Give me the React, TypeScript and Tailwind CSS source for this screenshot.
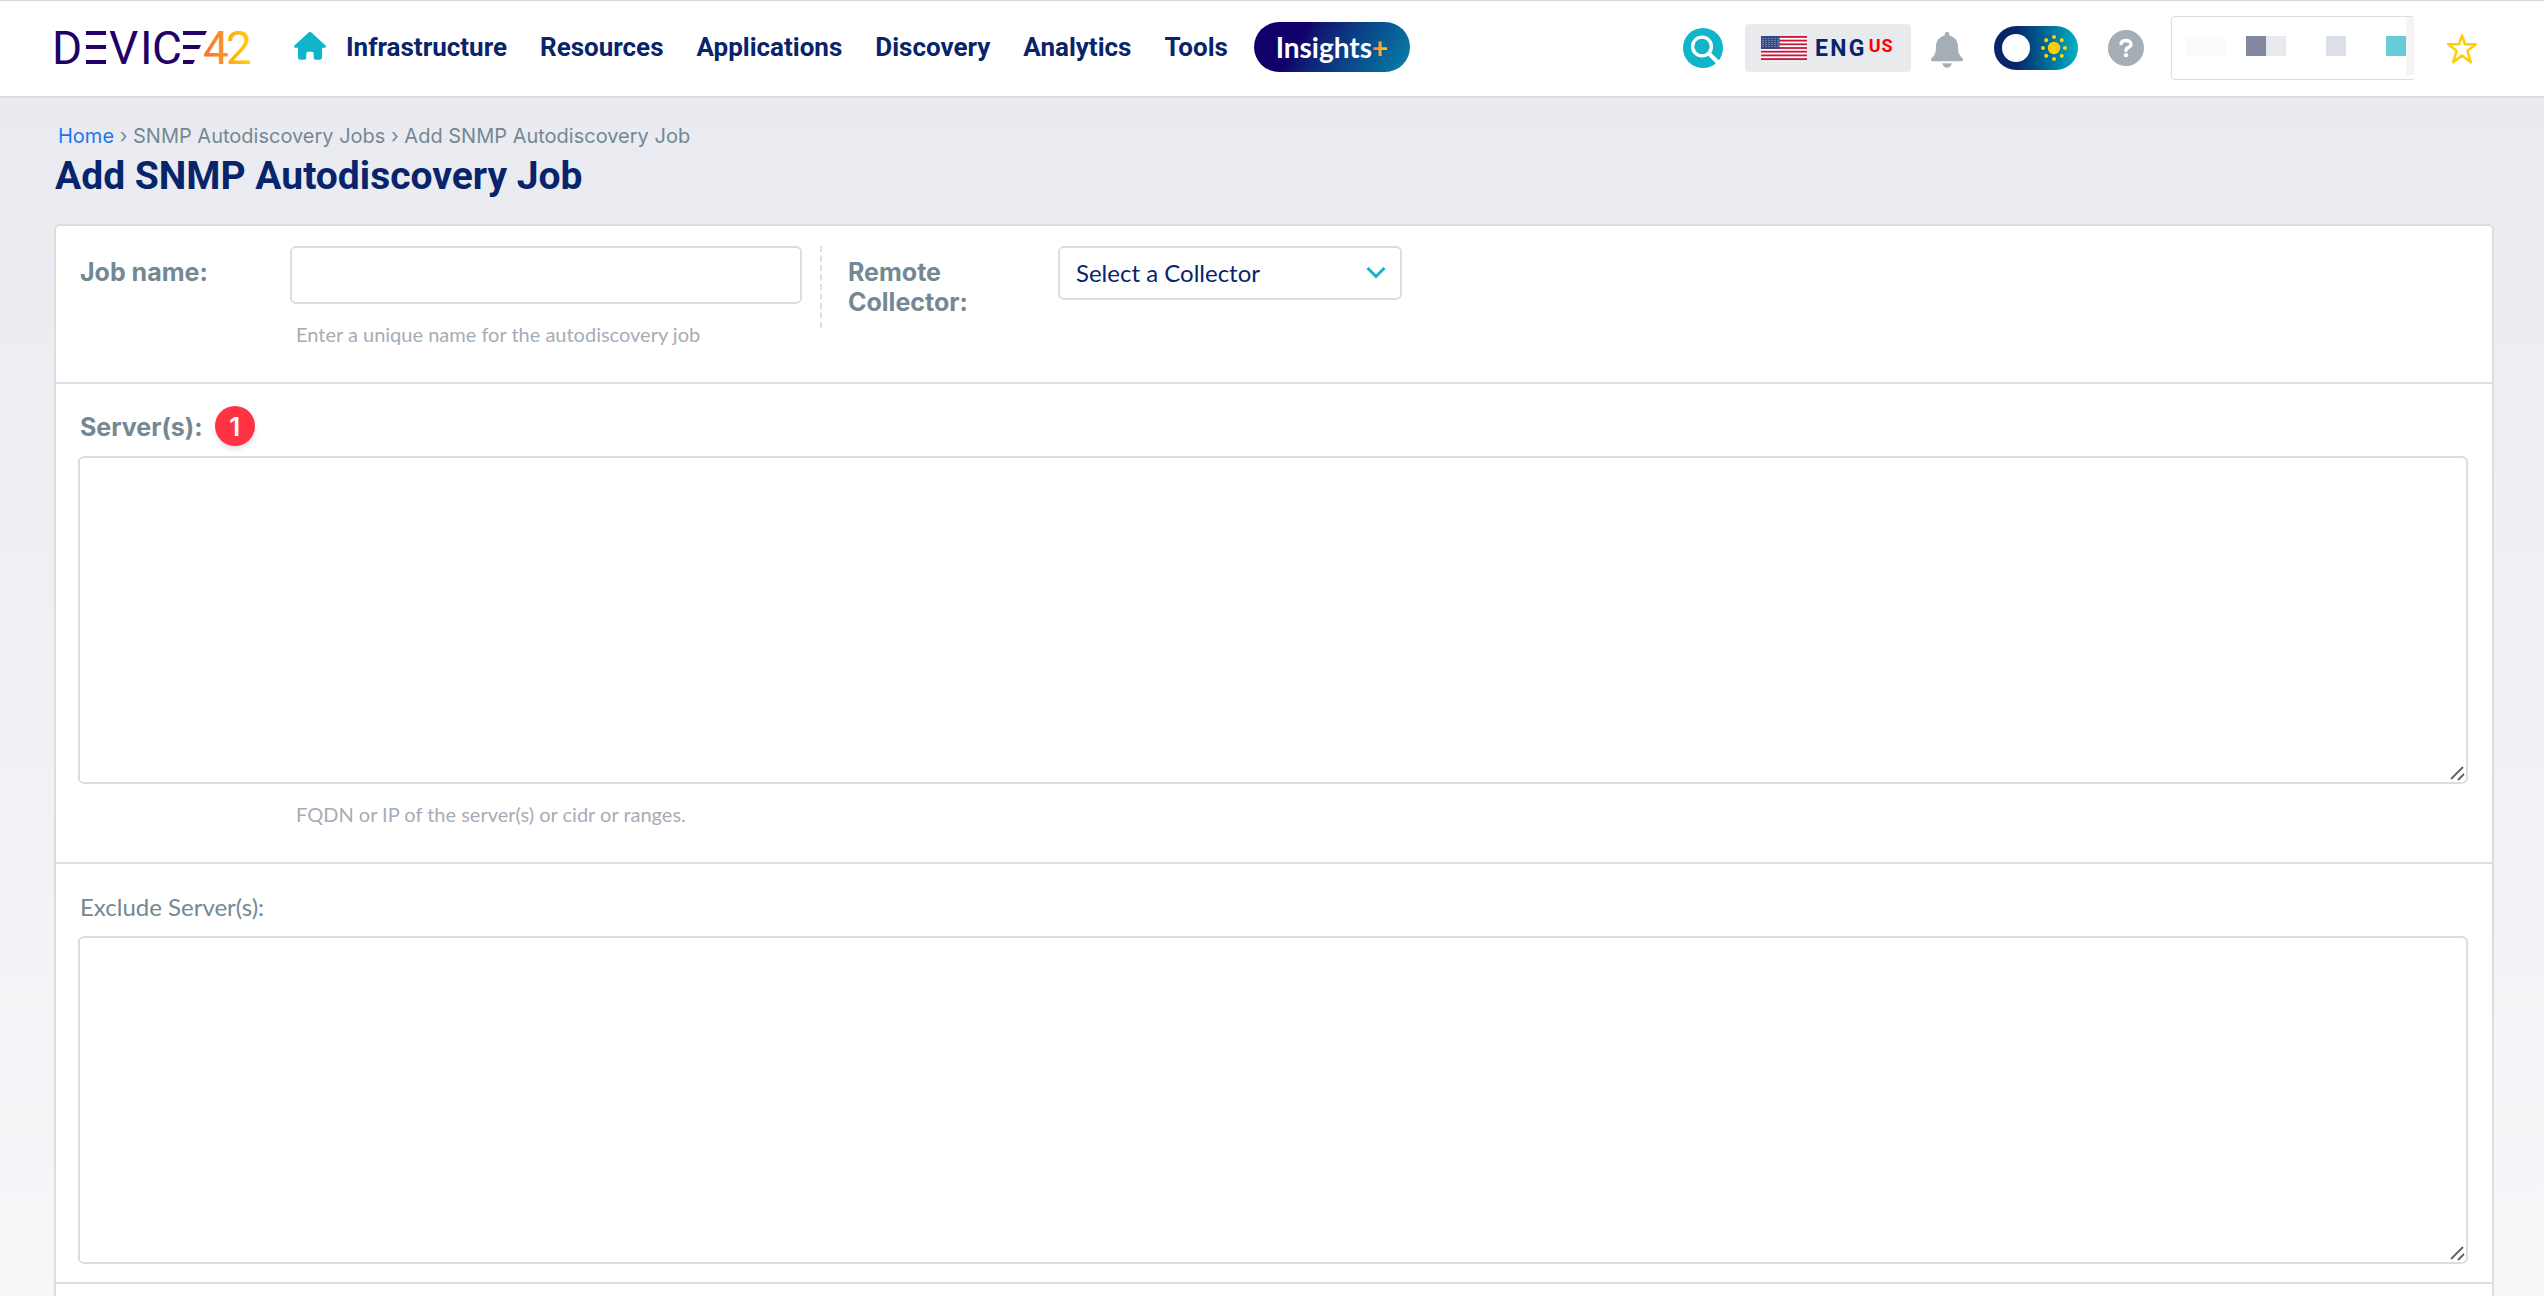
import React from "react";

const NAV_LINKS = ["Infrastructure", "Resources", "Applications", "Discovery", "Analytics", "Tools"];

function Logo() {
    return (
        <svg width="204" height="60" viewBox="-8 -10 204 60" role="img" aria-label="Device42">
            <defs>
                <linearGradient id="logo-four" x1="0" y1="0" x2="1" y2="0">
                    <stop offset="0" stopColor="#f4703a" />
                    <stop offset="1" stopColor="#fb9a24" />
                </linearGradient>
                <linearGradient id="logo-two" x1="0" y1="0" x2="1" y2="0">
                    <stop offset="0" stopColor="#fba41f" />
                    <stop offset="1" stopColor="#ffd400" />
                </linearGradient>
            </defs>
            <g fill="#220066" fontFamily="Roboto, sans-serif" fontSize="46" fontWeight="400">
                <text x="-4" y="37">D</text>
                <text x="53" y="37">V</text>
                <text x="84" y="37">I</text>
                <text x="96" y="37">C</text>
                {/* the two E marks are plain bars */}
                <rect x="30" y="4" width="20" height="4" />
                <rect x="30" y="18" width="20" height="4" />
                <rect x="30" y="33" width="20" height="4" />
                <polygon points="127,4 151,4 149,8 127,8" />
                <polygon points="127,18 145,18 143,22 127,22" />
                <polygon points="127,33 139,33 137,37 127,37" />
            </g>
            <g fontFamily="Roboto, sans-serif" fontSize="46" fontWeight="400">
                <text x="147" y="37" fill="url(#logo-four)">4</text>
                <text x="170" y="37" fill="url(#logo-two)">2</text>
            </g>
        </svg>
    );
}

function HomeIcon() {
    return (
        <svg width="32" height="28" viewBox="0 0 32 28" fill="#0fb5c9" aria-hidden="true">
            <path d="M14.6.6a2 2 0 0 1 2.8 0L31.3 13.2c1.2 1.1.6 2.6-.9 2.6H28V25.600a2.200 2.200 0 0 1-2.200 2.200H21.500a1.800 1.800 0 0 1-1.800-1.800V21.500a1.800 1.800 0 0 0-1.800-1.800H14.100a1.800 1.800 0 0 0-1.800 1.800V26a1.800 1.800 0 0 1-1.800 1.800H6.200A2.200 2.200 0 0 1 4 25.600V15.800H1.600C.1 15.800-.5 14.300.7 13.200z" />
        </svg>
    );
}

function SearchIcon() {
    return (
        <svg width="40" height="40" viewBox="0 0 40 40" fill="none" aria-hidden="true">
            <circle cx="20" cy="20" r="20" fill="#0fb5c9" />
            <circle cx="19" cy="18.500" r="9.400" stroke="#fff" strokeWidth="3.400" />
            <path d="M26 25.500 35 34.500" stroke="#fff" strokeWidth="4" />
        </svg>
    );
}

function FlagUS() {
    const stripes = [0, 2, 4, 6, 8, 10, 12];
    const stars: [number, number][] = [];
    for (let r = 0; r < 5; r++) {
        for (let c = 0; c < 6; c++) stars.push([2 + c * 3, 2 + r * 2.2]);
    }
    return (
        <svg width="46" height="24" viewBox="0 0 46 26" preserveAspectRatio="none" aria-hidden="true">
            <rect width="46" height="26" fill="#fff" />
            {stripes.map((s) => (
                <rect key={s} y={s * 2} width="46" height="2" fill="#c8193c" />
            ))}
            <rect width="18.500" height="14" fill="#2f4585" />
            {stars.map(([x, y]) => (
                <circle key={`${x}-${y}`} cx={x} cy={y + 0.5} r="0.6" fill="#b9c2dc" />
            ))}
        </svg>
    );
}

function BellIcon() {
    return (
        <svg width="32" height="36" viewBox="0 0 32 36" fill="#a5adb7" aria-hidden="true">
            <path d="M16 0a2.300 2.300 0 0 1 2.300 2.300v1.200C23.500 4.600 27 8.800 27 14.500c0 6 1 8.500 4 11.200.9.800 1 1.500 1 2.100 0 1-.8 1.500-1.700 1.500H1.700C.8 29.300 0 28.800 0 27.800c0-.6.1-1.300 1-2.100 3-2.700 4-5.200 4-11.200C5 8.800 8.500 4.600 13.700 3.500V2.300A2.300 2.300 0 0 1 16 0z" />
            <path d="M11.300 31.200h9.400c-.4 2.600-2.200 4.500-4.700 4.500s-4.300-1.900-4.700-4.500z" />
        </svg>
    );
}

function SunIcon() {
    const rays = [0, 45, 90, 135, 180, 225, 270, 315];
    return (
        <svg width="28" height="28" viewBox="0 0 28 28" fill="#ffce0a" aria-hidden="true">
            <circle cx="14" cy="14" r="6.200" />
            {rays.map((a) => (
                <circle key={a} cx="14" cy="3" r="2" transform={`rotate(${a} 14 14)`} />
            ))}
        </svg>
    );
}

function HelpIcon() {
    return (
        <svg width="36" height="36" viewBox="0 0 36 36" fill="none" aria-hidden="true">
            <circle cx="18" cy="18" r="18" fill="#a5adb7" />
            <path
                d="M13 13.500c.6-2 2.500-3 5-3 3 0 5 1.500 5 3.800 0 2.500-2.500 3-4.300 4.200-.6.400-.7 1-.7 1.900"
                stroke="#fff"
                strokeWidth="3.400"
                strokeLinecap="round"
            />
            <circle cx="18" cy="25.200" r="2.100" fill="#fff" />
        </svg>
    );
}

function StarIcon() {
    return (
        <svg width="32" height="32" viewBox="0 0 32 32" fill="none" aria-hidden="true">
            <path
                d="M16 3.500 19 12.300H29.800L21.500 18.800 24.800 30.300 16 23.500 7.200 30.300 10.500 18.800 2.200 12.300H13z"
                stroke="#ffce0a"
                strokeWidth="2.600"
                strokeLinejoin="round"
            />
        </svg>
    );
}

function TopBar() {
    return (
        <header className="flex h-[98px] items-center border-t border-b-2 border-t-[#d6d6d6] border-b-[#dcdee3] bg-white pr-[66px] pb-px pl-12">
            <div className="flex items-center pb-0.5">
                <a href="#" className="mr-[42px]">
                    <Logo />
                </a>
                <a href="#" aria-label="Home" className="mr-5 pb-0.5">
                    <HomeIcon />
                </a>
                <nav className="flex items-center gap-[33px] font-[Roboto,sans-serif] text-[26px] leading-8 font-bold text-[#08246b]">
                    {NAV_LINKS.map((label) => (
                        <a key={label} href="#">
                            {label}
                        </a>
                    ))}
                </nav>
                <a
                    href="#"
                    className="ml-[26px] flex h-[50px] w-[156px] items-center justify-center rounded-full bg-linear-120 from-[#12006a] from-30% to-[#0b81a8] font-[Lato,sans-serif] text-[28px] leading-8 font-bold text-white"
                >
                    Insights
                    <span className="bg-linear-to-r from-[#f4703a] to-[#ffd400] bg-clip-text font-black text-transparent">+</span>
                </a>
            </div>

            <div className="ml-auto flex items-center">
                <button type="button" aria-label="Search" className="mr-[22px]">
                    <SearchIcon />
                </button>
                <button
                    type="button"
                    className="mr-5 flex h-12 w-[166px] items-center rounded bg-[#e9eaee] pl-4 font-[Roboto,sans-serif] font-bold"
                >
                    <FlagUS />
                    <span className="ml-2 pt-0.5 text-[23px] leading-8 tracking-widest text-[#08246b]">ENG</span>
                    <span className="pb-1 pl-0.5 text-lg leading-6 tracking-wider text-[#ff0000]">US</span>
                </button>
                <button type="button" aria-label="Notifications" className="mr-[31px] pt-1">
                    <BellIcon />
                </button>
                <label className="mr-[30px] flex h-11 w-[84px] cursor-pointer items-center justify-between rounded-full bg-linear-to-r from-[#08246b] from-25% to-[#0bb0c4] pr-[10px] pl-2">
                    <input type="checkbox" className="sr-only" aria-label="Dark mode" />
                    <span className="size-7 rounded-full bg-white" />
                    <SunIcon />
                </label>
                <button type="button" aria-label="Help" className="mr-[27px]">
                    <HelpIcon />
                </button>
                <button
                    type="button"
                    aria-label="Account"
                    className="mr-[31px] flex h-16 w-[244px] items-center justify-between rounded border border-[#dedede] border-r-transparent bg-white pl-3.5"
                >
                    <span className="mb-1 flex h-5 flex-1 items-center">
                        <span className="h-5 w-10 bg-[#fbfbfb]" />
                        <span className="ml-5 size-5 bg-[#84889f]" />
                        <span className="size-5 bg-[#e9eaee]" />
                        <span className="ml-10 size-5 bg-[#dbdfe8]" />
                        <span className="ml-10 size-5 bg-[#67ccd7]" />
                    </span>
                    <span className="mb-1 h-[58px] w-[9px] bg-[#f5f5f5]" />
                </button>
                <button type="button" aria-label="Add to favorites">
                    <StarIcon />
                </button>
            </div>
        </header>
    );
}

function Hint({ children }: { children: React.ReactNode }) {
    return <p className="mt-4 text-xl leading-7 text-[#a5adb7]">{children}</p>;
}

function ServerField({ id }: { id: string }) {
    return (
        <div className="relative mt-2.5">
            <textarea
                id={id}
                className="block h-[328px] w-full resize-none rounded-md border-2 border-[#dddddd] bg-white p-3 text-2xl text-[#08246b] outline-none"
            />
            <svg className="absolute right-[3px] bottom-[3px] text-[#666]" width="16" height="16" viewBox="0 0 16 16" aria-hidden="true">
                <path d="M2 14 14 2M9 15l6-6" stroke="currentColor" strokeWidth="2" />
            </svg>
        </div>
    );
}

export default function App() {
    return (
        <div className="flex min-h-screen flex-col bg-linear-to-b from-[#e9eaef] to-[#f6f7f9] font-[Lato,sans-serif] text-[#748893]">
            <TopBar />

            <main className="flex flex-1 flex-col pt-6 pr-[50px] pl-[54px]">
                <nav aria-label="Breadcrumb" className="px-1 font-[Inter,sans-serif] text-xl leading-7">
                    <a href="#" className="text-[#1a76f0]">
                        Home
                    </a>{" "}
                    › SNMP Autodiscovery Jobs › Add SNMP Autodiscovery Job
                </nav>
                <h1 className="mt-0.5 mb-6 pl-px font-[Roboto,sans-serif] text-[39px] leading-12 font-bold text-[#08246b]">
                    Add SNMP Autodiscovery Job
                </h1>

                <form className="flex flex-1 flex-col rounded-t-md border-2 border-b-0 border-[#dddddd] bg-white">
                    <section className="flex border-b-2 border-[#dce0e5] pt-5 pr-6 pb-[34px] pl-6">
                        <label htmlFor="job-name" className="w-[210px] pt-[11px] font-[Inter,sans-serif] text-[25px] leading-[30px] font-bold">
                            Job name:
                        </label>
                        <div className="w-[512px]">
                            <input
                                id="job-name"
                                type="text"
                                className="block h-[58px] w-full rounded-md border-2 border-[#dddddd] bg-white px-4 text-2xl text-[#08246b] outline-none"
                            />
                            <div className="pl-1.5">
                                <Hint>Enter a unique name for the autodiscovery job</Hint>
                            </div>
                        </div>
                        <div className="mr-[26px] ml-[18px] h-[82px] border-l-2 border-dashed border-[#dedfe3]" />
                        <label htmlFor="collector" className="w-[210px] pt-[11px] font-[Inter,sans-serif] text-[25px] leading-[30px] font-bold">
                            Remote
                            <br />
                            Collector:
                        </label>
                        <div className="relative h-[54px] w-[344px]">
                            <select
                                id="collector"
                                className="h-full w-full appearance-none rounded-md border-2 border-[#dddddd] bg-white pl-4 text-2xl text-[#08246b] outline-none"
                            >
                                <option>Select a Collector</option>
                            </select>
                            <svg
                                className="pointer-events-none absolute top-5 right-4"
                                width="20"
                                height="14"
                                viewBox="0 0 20 14"
                                fill="none"
                                aria-hidden="true"
                            >
                                <path d="M1.500 2 10 10.500 18.500 2" stroke="#0fb5c9" strokeWidth="3" />
                            </svg>
                        </div>
                    </section>

                    <section className="border-b-2 border-[#dce0e5] pt-[22px] pr-6 pb-[34px] pl-[22px]">
                        <div className="flex h-10 items-center gap-3 pl-0.5">
                            <label htmlFor="servers" className="pt-0.5 font-[Inter,sans-serif] text-[25px] leading-[30px] font-bold">
                                Server(s):
                            </label>
                            <span className="flex size-10 items-center justify-center rounded-full bg-[#ff3344] font-[Inter,sans-serif] text-[26px] font-semibold text-white shadow-md">
                                1
                            </span>
                        </div>
                        <ServerField id="servers" />
                        <div className="pl-[218px]">
                            <Hint>FQDN or IP of the server(s) or cidr or ranges.</Hint>
                        </div>
                    </section>

                    <section className="border-b-2 border-[#dce0e5] pt-[22px] pr-6 pb-[18px] pl-[22px]">
                        <div className="flex h-10 items-center pl-0.5">
                            <label htmlFor="exclude-servers" className="pt-0.5 text-2xl leading-[30px]">
                                Exclude Server(s):
                            </label>
                        </div>
                        <ServerField id="exclude-servers" />
                    </section>
                </form>
            </main>
        </div>
    );
}
